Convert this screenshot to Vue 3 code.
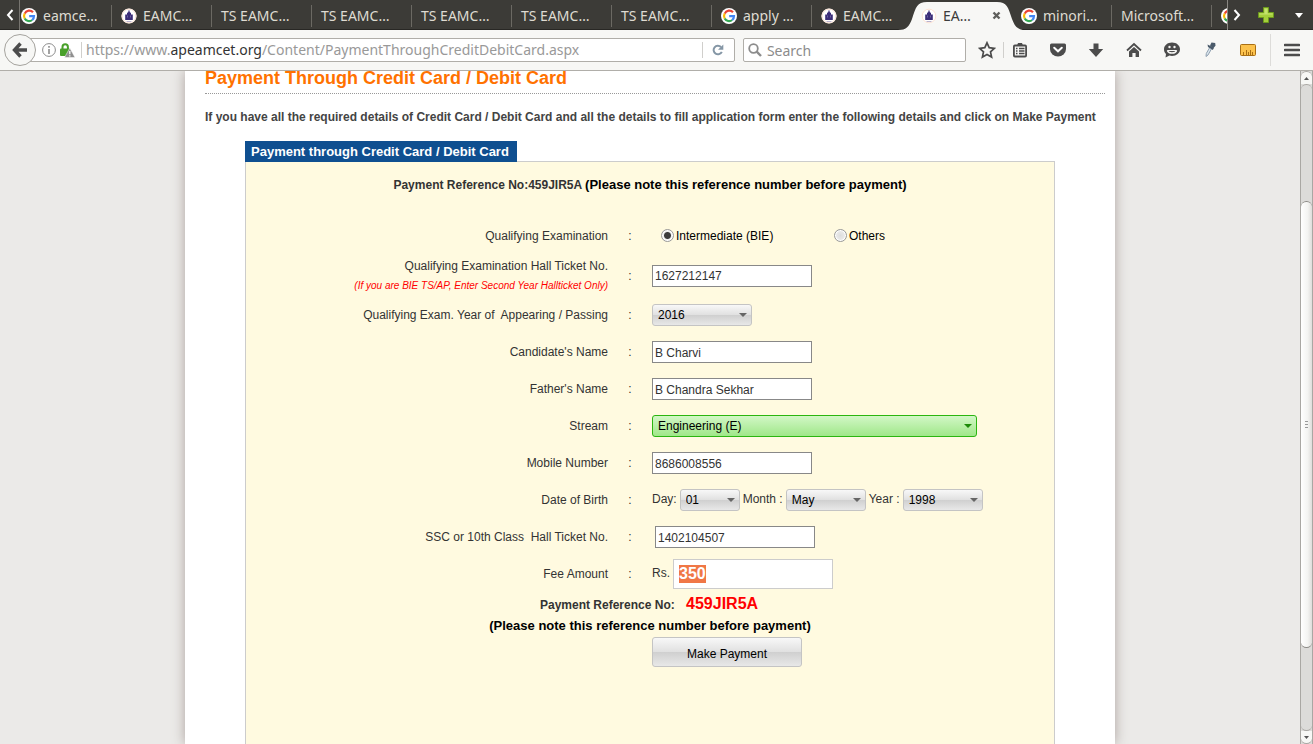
<script setup>
import { onMounted, ref } from 'vue'

const tabs = [
  { label: 'eamce…', icon: 'google', first: true },
  { label: 'EAMC…', icon: 'crest' },
  { label: 'TS EAMC…' },
  { label: 'TS EAMC…' },
  { label: 'TS EAMC…' },
  { label: 'TS EAMC…' },
  { label: 'TS EAMC…' },
  { label: 'apply …', icon: 'google' },
  { label: 'EAMC…', icon: 'crest', flat: true },
  { label: 'EA…', icon: 'crest', active: true, flat: true },
  { label: 'minori…', icon: 'google' },
  { label: 'Microsoft…' },
  { label: '', icon: 'google', last: true },
]

const exam = ref('bie')
const hallTicket = ref('1627212147')
const passYear = ref('2016')
const candidate = ref('B Charvi')
const father = ref('B Chandra Sekhar')
const stream = ref('E')
const mobile = ref('8686008556')
const day = ref('01')
const month = ref('May')
const year = ref('1998')
const ssc = ref('1402104507')
const fee = ref('350')
const feeInput = ref(null)

onMounted(() => {
  feeInput.value.focus({ preventScroll: true })
  feeInput.value.select()
})
</script>

<template>
  <div class="browser">
    <svg class="defs" width="0" height="0" aria-hidden="true">
      <symbol id="google" viewBox="0 0 16 16">
        <circle cx="8" cy="8" r="8" fill="#fff" />
        <g fill="none" stroke-width="2.2">
          <path d="M12 4.3A5 5 0 0 0 3.7 5.6" stroke="#ea4335" />
          <path d="M3.7 5.5A5 5 0 0 0 3.7 10.5" stroke="#fbbc05" />
          <path d="M3.7 10.4A5 5 0 0 0 11.2 12" stroke="#34a853" />
          <path d="M11.2 12A5 5 0 0 0 13 8.1H8.2" stroke="#4285f4" />
        </g>
      </symbol>
      <symbol id="crest" viewBox="0 0 16 16">
        <circle cx="8" cy="8" r="7.6" fill="#fff" />
        <circle cx="8" cy="8" r="6.900" fill="none" stroke="#fae0d0" stroke-width="1" />
        <path d="M7.400 2.500h1.200V4L10 5v1.500h1.800V12H4.200V6.500H6V5l1.400-1z" fill="#3b2d78" />
        <path d="M6.500 7.500v2M9.500 7.500v2" stroke="#8d83b8" stroke-width=".6" />
        <path d="M5.500 13.500h5" stroke="#b9b2d0" stroke-width="1" />
      </symbol>
    </svg>

    <nav class="tabbar" aria-label="Tabs">
      <button class="scroll-left" aria-label="Scroll tabs left">
        <svg width="9" height="14" viewBox="0 0 9 14"><path d="M7.500 2 3 7l4.500 5" fill="none" stroke="#fff" stroke-width="2" /></svg>
      </button>
      <button
        v-for="(t, i) in tabs"
        :key="i"
        class="tab"
        :class="{ first: t.first, active: t.active, flat: t.flat, last: t.last }"
        :aria-label="t.label || 'Google'"
      >
        <svg v-if="t.active" class="shape" width="128" height="28" viewBox="0 0 128 28">
          <path d="M0 28C8 28 11 25 14 17 18 5 19 0 29 0H99C109 0 110 5 114 17 117 25 120 28 128 28Z" fill="#f7f7f5" />
        </svg>
        <svg v-if="t.icon" class="fav" width="16" height="16"><use :href="'#' + t.icon" /></svg>
        <span v-if="t.label" class="tab-label">{{ t.label }}</span>
        <svg v-if="t.active" class="close" width="9" height="9" viewBox="0 0 9 9"><path d="M1.500 1.500l6 6M7.500 1.500l-6 6" stroke="#5f5f5c" stroke-width="2.400" /></svg>
      </button>
      <div class="tab-tools">
        <button class="tool-tab" aria-label="Scroll tabs right">
          <svg width="9" height="14" viewBox="0 0 9 14"><path d="M1.500 2 6 7l-4.500 5" fill="none" stroke="#fff" stroke-width="2" /></svg>
        </button>
        <button class="tool-tab" aria-label="New tab">
          <svg width="16" height="16" viewBox="0 0 16 16"><path d="M5.500.5h5v5h5v5h-5v5h-5v-5h-5v-5h5z" fill="#a5cf3c" stroke="#6d9a1d" /><path d="M6.500 1.500h3v5h5v1h-13v-1h5z" fill="#c4e26c" /></svg>
        </button>
        <button class="tool-tab" aria-label="List all tabs">
          <svg width="8" height="5" viewBox="0 0 8 5"><path d="M0 0h8L4 5z" fill="#fff" /></svg>
        </button>
      </div>
    </nav>

    <header class="toolbar">
      <button class="back" aria-label="Back">
        <svg width="16" height="16" viewBox="0 0 16 16"><path d="M8.500 1.500 2.500 8l6 6.500M3 8h12" fill="none" stroke="#4c4c4c" stroke-width="3.400" /></svg>
      </button>
      <div class="urlbar">
        <svg width="14" height="14" viewBox="0 0 14 14"><circle cx="7" cy="7" r="6.400" fill="none" stroke="#8c8c8c" /><path d="M7 6v5M7 3v1.800" stroke="#8c8c8c" stroke-width="1.600" /></svg>
        <svg class="lock" width="15" height="15" viewBox="0 0 15 15">
          <path d="M2.500 6V4a2.700 2.700 0 0 1 5.400 0v2" fill="none" stroke="#48a02a" stroke-width="2" />
          <rect x="0" y="5.500" width="10" height="7.500" rx="1" fill="#48a02a" />
          <path d="M9.800 5 15 14.500H4.500z" fill="#8f8f8f" stroke="#fff" stroke-width=".5" />
          <path d="M9.800 8v3.300M9.800 12.200v1.200" stroke="#fff" stroke-width="1.300" />
        </svg>
        <i class="sep"></i>
        <div class="url" role="textbox" aria-label="Address" contenteditable="true" spellcheck="false">https://www.<b>apeamcet.org</b>/Content/PaymentThroughCreditDebitCard.aspx</div>
        <i class="sep"></i>
        <button class="reload" aria-label="Reload">
          <svg width="12" height="12" viewBox="0 0 12 12"><path d="M9.800 7.800A4.300 4.300 0 1 1 9 3" fill="none" stroke="#8496a5" stroke-width="2" /><path d="M11.300.5v5.200H6z" fill="#8496a5" /></svg>
        </button>
      </div>
      <label class="search">
        <svg width="14" height="14" viewBox="0 0 14 14"><circle cx="5.500" cy="5.500" r="4.300" fill="none" stroke="#8c8c8c" stroke-width="1.800" /><path d="M8.700 8.700 13 13" stroke="#8c8c8c" stroke-width="2.400" /></svg>
        <input type="text" placeholder="Search" aria-label="Search" />
      </label>
      <div class="icons">
        <button aria-label="Bookmark this page">
          <svg width="18" height="18" viewBox="0 0 18 18"><path d="M9 1.800l2.200 4.900 5.200.6-3.900 3.600 1.100 5.200L9 13.500l-4.600 2.600 1.100-5.200L1.600 7.300l5.200-.6z" fill="none" stroke="#4c4c4c" stroke-width="1.700" /></svg>
        </button>
        <i class="sep"></i>
        <button aria-label="Bookmarks">
          <svg width="16" height="16" viewBox="0 0 16 16"><rect x="1.900" y="3.500" width="12.200" height="11" rx="1" fill="none" stroke="#4c4c4c" stroke-width="1.800" /><path d="M5 3.500 6 1h4l1 2.500z" fill="#4c4c4c" /><path d="M4 6.500h1.500M4 9h1.500M4 11.500h1.500M7 6.500h5.500M7 9h5.500M7 11.500h5.500" stroke="#4c4c4c" stroke-width="1.300" /></svg>
        </button>
        <button aria-label="Save to Pocket">
          <svg width="16" height="16" viewBox="0 0 16 16"><path d="M1.500 1.500h13Q16 1.500 16 3v4a8 7.500 0 0 1-16 0V3q0-1.500 1.500-1.500z" fill="#4c4c4c" /><path d="M4.200 5.700 8 9.300l3.800-3.600" fill="none" stroke="#fff" stroke-width="2" stroke-linecap="round" /></svg>
        </button>
        <button aria-label="Downloads">
          <svg width="16" height="16" viewBox="0 0 16 16"><path d="M5.500 1.500h5v5.500h4.700L8 15 .8 7h4.700z" fill="#4c4c4c" /></svg>
        </button>
        <button aria-label="Home">
          <svg width="16" height="16" viewBox="0 0 16 16"><path d="M1 8.500 8 2l7 6.500" fill="none" stroke="#4c4c4c" stroke-width="1.800" /><path d="M8 5l5 4.600V15H9.600v-4H6.400v4H3V9.600z" fill="#4c4c4c" /></svg>
        </button>
        <button aria-label="Chat">
          <svg width="16" height="16" viewBox="0 0 16 16"><path d="M8 .5c4.500 0 8 2.900 8 6.700s-3.500 6.700-8 6.700c-1 0-1.700-.1-2.500-.3L1.500 15.500 2 12C.7 10.800 0 9.200 0 7.200 0 3.400 3.500.5 8 .5z" fill="#4c4c4c" /><path d="M3.500 8.500c.8 3.400 8.200 3.400 9 0" fill="none" stroke="#f7f7f5" stroke-width="1.500" /><path d="M3.300 8.500h9.400" stroke="#f7f7f5" /><circle cx="5.500" cy="5" r="1.200" fill="#f7f7f5" /><circle cx="10.500" cy="5" r="1.200" fill="#f7f7f5" /></svg>
        </button>
        <button aria-label="Color picker">
          <svg width="16" height="16" viewBox="0 0 16 16"><path d="M8 5 4.300 11.500 4 14.500l2-1.500 3.800-6.700" fill="#dbe6ee" stroke="#8fa0b0" /><path d="M5.500 2.500 12 5.800 10.800 8 6 5z" fill="#4a5a6a" /><path d="M8 3.500 9.500.5l3.700.4.300 2.800-2.500 2.800z" fill="#4a5a6a" /></svg>
        </button>
        <button aria-label="Ruler">
          <svg width="18" height="14" viewBox="0 0 18 14"><rect x="1.500" y="1.500" width="15" height="11" rx="1" fill="#fcc24c" stroke="#a96f14" /><path d="M4.500 12V9M7.500 12V7M9.500 12V9M11.500 12V7M13.500 12V9" stroke="#a96f14" /></svg>
        </button>
      </div>
      <button class="menu" aria-label="Open menu">
        <svg width="16" height="14" viewBox="0 0 16 14"><path d="M1 2h14M1 7h14M1 12h14" stroke="#4c4c4c" stroke-width="2.600" stroke-linecap="round" /></svg>
      </button>
    </header>

    <div class="viewport">
      <div class="canvas">
        <main class="page">
          <h1>Payment Through Credit Card / Debit Card</h1>
          <p class="intro">If you have all the required details of Credit Card / Debit Card and all the details to fill application form enter the following details and click on Make Payment</p>
          <section class="panel">
            <h2>Payment through Credit Card / Debit Card</h2>
            <form class="box" @submit.prevent>
              <p class="reference">Payment Reference No:459JIR5A <strong>(Please note this reference number before payment)</strong></p>

              <div class="row">
                <span class="label">Qualifying Examination</span><span class="colon">:</span>
                <div class="field radios">
                  <label><input v-model="exam" type="radio" name="exam" value="bie" />Intermediate (BIE)</label>
                  <label><input v-model="exam" type="radio" name="exam" value="others" />Others</label>
                </div>
              </div>
              <div class="row tall">
                <label class="label" for="hall">Qualifying Examination Hall Ticket No.<em>(If you are BIE TS/AP, Enter Second Year Hallticket Only)</em></label><span class="colon">:</span>
                <div class="field"><input id="hall" v-model="hallTicket" class="text" type="text" /></div>
              </div>
              <div class="row">
                <label class="label" for="pass">Qualifying Exam. Year of&nbsp; Appearing / Passing</label><span class="colon">:</span>
                <div class="field"><span class="pick w100"><select id="pass" v-model="passYear"><option>2016</option></select></span></div>
              </div>
              <div class="row">
                <label class="label" for="cand">Candidate's Name</label><span class="colon">:</span>
                <div class="field"><input id="cand" v-model="candidate" class="text low" type="text" /></div>
              </div>
              <div class="row">
                <label class="label" for="father">Father's Name</label><span class="colon">:</span>
                <div class="field"><input id="father" v-model="father" class="text low" type="text" /></div>
              </div>
              <div class="row">
                <label class="label" for="stream">Stream</label><span class="colon">:</span>
                <div class="field"><span class="pick green"><select id="stream" v-model="stream"><option value="E">Engineering (E)</option></select></span></div>
              </div>
              <div class="row">
                <label class="label" for="mobile">Mobile Number</label><span class="colon">:</span>
                <div class="field"><input id="mobile" v-model="mobile" class="text low" type="text" /></div>
              </div>
              <div class="row">
                <span class="label">Date of Birth</span><span class="colon">:</span>
                <div class="field dob">
                  <label for="day">Day:</label><span class="pick w60"><select id="day" v-model="day"><option>01</option></select></span>
                  <label for="month">Month :</label><span class="pick w80"><select id="month" v-model="month"><option>May</option></select></span>
                  <label for="year">Year :</label><span class="pick w80"><select id="year" v-model="year"><option>1998</option></select></span>
                </div>
              </div>
              <div class="row">
                <label class="label" for="ssc">SSC or 10th Class&nbsp; Hall Ticket No.</label><span class="colon">:</span>
                <div class="field indent"><input id="ssc" v-model="ssc" class="text low" type="text" /></div>
              </div>
              <div class="row">
                <label class="label" for="fee">Fee Amount</label><span class="colon">:</span>
                <div class="field dob"><span>Rs.</span><input id="fee" ref="feeInput" v-model="fee" class="fee" type="text" /></div>
              </div>

              <p class="again">Payment Reference No: <b>459JIR5A</b></p>
              <p class="note">(Please note this reference number before payment)</p>
              <button class="pay" type="submit">Make Payment</button>
            </form>
          </section>
        </main>
      </div>
      <div class="scrollbar" aria-hidden="true">
        <span class="sb-end top"><svg width="5" height="3" viewBox="0 0 5 3"><path d="M0 3h5L2.500 0z" fill="#555" /></svg></span>
        <span class="track-a"></span>
        <span class="thumb"><i></i><i></i><i></i></span>
        <span class="track-b"></span>
        <span class="sb-end bottom"><svg width="5" height="3" viewBox="0 0 5 3"><path d="M0 0h5L2.500 3z" fill="#555" /></svg></span>
      </div>
    </div>
  </div>
</template>

<style>
html,
body {
  margin: 0;
  overflow: hidden;
}
</style>

<style scoped>
* {
  box-sizing: border-box;
}
button {
  font: inherit;
  padding: 0;
  border: 0;
  background: none;
  color: inherit;
}
svg {
  display: block;
  flex: none;
}
.defs {
  position: absolute;
}
.browser {
  height: 100vh;
  display: flex;
  flex-direction: column;
  font-family: "Noto Sans", "Open Sans", sans-serif;
  font-size: 14px;
}

/* tab strip */
.tabbar {
  flex: none;
  height: 30px;
  display: flex;
  background: #3c3b37;
  color: #dfdbd2;
  box-shadow: inset 0 -1px #282724;
  overflow: hidden;
}
.scroll-left {
  flex: none;
  width: 20px;
  display: flex;
  align-items: center;
  justify-content: center;
  border-right: 1px solid #777570;
}
.tab {
  position: relative;
  flex: none;
  width: 100px;
  display: flex;
  align-items: center;
  gap: 6px;
  padding: 1px 0 0 9px;
  text-align: left;
}
.tab::after {
  content: "";
  position: absolute;
  right: 0;
  top: 5px;
  height: 22px;
  border-right: 1px solid #6b6963;
}
.tab.flat::after,
.tab.last::after {
  display: none;
}
.tab.first {
  width: 92px;
  padding-left: 1px;
}
.tab.last {
  width: 16px;
  flex: 1;
  min-width: 0;
  overflow: hidden;
}
.tab.active {
  color: #3c3c3c;
}
.fav,
.tab-label,
.close {
  position: relative;
}
.tab-label {
  white-space: nowrap;
}
.shape {
  position: absolute;
  left: -14px;
  bottom: 0;
}
.close {
  margin-left: auto;
  margin-right: 11px;
}
.tab-tools {
  flex: none;
  width: 86px;
  display: flex;
  justify-content: space-between;
  padding: 0 10px 0 5px;
  border-left: 1px solid #8a8883;
}
.tool-tab {
  display: flex;
  align-items: center;
}
.tool-tab:nth-child(2) {
  padding-right: 5px;
}

/* navigation toolbar */
.toolbar {
  flex: none;
  height: 41px;
  display: flex;
  align-items: center;
  background: #f7f7f5;
  border-bottom: 1px solid #b0aea9;
  padding-left: 4px;
}
.back {
  position: relative;
  z-index: 1;
  flex: none;
  width: 32px;
  height: 32px;
  display: flex;
  align-items: center;
  justify-content: center;
  border: 1px solid #a5a39e;
  border-radius: 50%;
  background: #f7f7f5;
}
.urlbar {
  flex: 714 1 0;
  min-width: 0;
  height: 24px;
  margin-left: -16px;
  padding-left: 21px;
  display: flex;
  align-items: center;
  background: #fff;
  border: 1px solid #b0aea9;
  border-radius: 2px;
}
.lock {
  margin-left: 4px;
}
.sep {
  flex: none;
  width: 1px;
  height: 16px;
  background: #d0cfcc;
}
.lock + .sep {
  margin: 0 4px 0 6px;
}
.url {
  flex: 1;
  min-width: 0;
  overflow: hidden;
  white-space: nowrap;
  line-height: 20px;
  color: #999;
  outline: none;
}
.url b {
  font-weight: 400;
  color: #333;
}
.reload {
  width: 31px;
  display: flex;
  justify-content: center;
}
.search {
  flex: 224 1 0;
  min-width: 0;
  height: 24px;
  margin-left: 8px;
  padding-left: 4px;
  display: flex;
  align-items: center;
  gap: 5px;
  background: #fff;
  border: 1px solid #b0aea9;
  border-radius: 2px;
}
.search input {
  flex: 1;
  min-width: 0;
  height: 20px;
  border: 0;
  padding: 0;
  outline: none;
  background: none;
  font: inherit;
}
.search input::placeholder {
  color: #8c8c8c;
}
.icons {
  flex: none;
  display: flex;
  align-items: center;
  gap: 18px;
  margin-left: 11px;
}
.icons button {
  width: 20px;
  height: 20px;
  display: flex;
  align-items: center;
  justify-content: center;
}
.icons .sep {
  margin: 0 -12px;
}
.menu {
  flex: none;
  width: 43px;
  height: 32px;
  margin-left: 12px;
  display: flex;
  align-items: center;
  justify-content: center;
  border-left: 1px solid #dddcd9;
}

/* page */
.viewport {
  flex: 1;
  min-height: 0;
  display: flex;
  overflow: hidden;
  font-family: "Liberation Sans", Arial, sans-serif;
  font-size: 12px;
  color: #333;
}
.canvas {
  flex: 1;
  min-width: 0;
  display: flex;
  justify-content: center;
  background: #ebeae8;
  overflow: hidden;
}
.page {
  width: 930px;
  padding: 0 10px 0 20px;
  display: flex;
  flex-direction: column;
  background: #fff;
  box-shadow: 0 0 12px #aca29e;
}
h1 {
  margin: 0;
  padding-bottom: 8px;
  border-bottom: 1px dotted #999;
  font-size: 18px;
  line-height: 14px;
  color: #ff7200;
}
.intro {
  margin: 14px 0 15px;
  font-weight: 700;
  line-height: 18px;
  white-space: nowrap;
  color: #444;
}
.panel {
  flex: 1;
  display: flex;
  flex-direction: column;
  align-items: flex-start;
  margin: 0 50px 0 40px;
}
h2 {
  position: relative;
  margin: 0 0 -1px;
  padding: 0 8px 0 6px;
  background: #0f4f90;
  color: #fff;
  font-size: 13px;
  line-height: 21px;
}
.box {
  flex: 1;
  width: 100%;
  background: #fffae0;
  border: 1px solid #ccc;
  border-bottom: 0;
}
.reference {
  margin: 0;
  padding-top: 13px;
  line-height: 20px;
  height: 55px;
  text-align: center;
  font-weight: 700;
}
.reference strong {
  color: #000;
  font-size: 13px;
}
.row {
  display: grid;
  grid-template-columns: 362px 44px 1fr;
  align-items: center;
  height: 37px;
}
.row.tall {
  height: 42px;
  padding-top: 2px;
}
.label {
  text-align: right;
  line-height: 20px;
}
.label em {
  display: block;
  font-size: 10px;
  color: #f00;
}
.colon {
  text-align: center;
}
.field {
  display: flex;
  align-items: center;
}
.radios {
  color: #000;
}
.radios label {
  width: 173px;
  padding-left: 9px;
  display: flex;
  align-items: center;
  gap: 2px;
}
.radios input {
  appearance: none;
  width: 13px;
  height: 13px;
  margin: 0;
  border: 1px solid #999;
  border-radius: 50%;
  background: radial-gradient(#ddd, #f4f4f4);
  box-shadow: inset 0 0 0 1px #fff;
}
.radios input:checked {
  background: radial-gradient(circle, #3c3c3c 0 3px, #eee 4px);
}
.text {
  width: 160px;
  height: 22px;
  padding: 0 2px;
  border: 1px solid #888;
  border-radius: 0;
  background: #fff;
  color: #333;
  font: inherit;
}
.text.low {
  padding-top: 2px;
}
.indent {
  padding-left: 3px;
}
.pick {
  position: relative;
  display: block;
  height: 22px;
}
.pick::after {
  content: "";
  position: absolute;
  right: 5px;
  top: 9px;
  border: 4px solid transparent;
  border-top-color: #666;
  border-bottom: 0;
  pointer-events: none;
}
.pick select {
  appearance: none;
  display: block;
  width: 100%;
  height: 22px;
  padding: 0 5px;
  border: 1px solid #c4c4c4;
  border-radius: 3px;
  background: linear-gradient(#f8f8f8, #e0e0e0 50%, #cfcfcf 50%, #e8e8e8);
  color: #000;
  font: inherit;
}
.w100 {
  width: 100px;
}
.w80 {
  width: 80px;
}
.w60 {
  width: 60px;
}
.green {
  width: 325px;
}
.pick.green select {
  border-color: #2bb510;
  background: linear-gradient(#d2f7c6, #a0e789);
}
.green::after {
  border-top-color: #1d8a08;
}
.dob {
  gap: 3px;
}
.dob label,
.dob > span:first-child {
  padding-bottom: 2px;
}
.fee {
  width: 160px;
  height: 30px;
  padding: 0 5px;
  border: 1px solid #ccc;
  background: #fff;
  outline: none;
  font: 700 16px "Liberation Sans", Arial, sans-serif;
  color: #333;
}
.fee::selection {
  background: #f07746;
  color: #fff;
}
.again,
.note {
  margin: 0;
  line-height: 22px;
  height: 22px;
  font-weight: 700;
}
.again {
  margin-top: 1px;
  padding-left: 294px;
}
.again b {
  margin-left: 8px;
  font-size: 16px;
  color: #f00;
}
.note {
  text-align: center;
  color: #000;
  font-size: 13px;
}
.pay {
  display: block;
  width: 150px;
  height: 30px;
  margin-left: 406px;
  padding-top: 3px;
  border: 1px solid #c4c4c4;
  border-radius: 3px;
  background: linear-gradient(#f8f8f8, #e0e0e0 50%, #cfcfcf 50%, #e8e8e8);
  color: #000;
}

/* scrollbar */
.scrollbar {
  flex: none;
  width: 13px;
  display: flex;
  flex-direction: column;
  background: #dcdbd9;
  border: 1px solid #a9a7a3;
  border-top: 0;
  border-bottom: 0;
}
.sb-end {
  flex: none;
  height: 13px;
  display: flex;
  align-items: center;
  justify-content: center;
  background: #f7f7f5;
}
.sb-end.top {
  border-top: 1px solid #a9a7a3;
  border-radius: 6px 6px 0 0;
}
.sb-end.bottom {
  border-bottom: 1px solid #a9a7a3;
  border-radius: 0 0 6px 6px;
}
.track-a {
  flex: 117;
  border-top: 1px solid #a9a7a3;
  border-radius: 6px 6px 0 0;
}
.track-b {
  flex: 83;
  border-bottom: 1px solid #a9a7a3;
  border-radius: 0 0 6px 6px;
}
.thumb {
  flex: 447;
  display: flex;
  flex-direction: column;
  align-items: center;
  justify-content: center;
  gap: 2px;
  border: solid #8c8a86;
  border-width: 1px 0;
  border-radius: 6px;
  background: linear-gradient(90deg, #fff, #f4f4f2 60%, #dedddb);
}
.thumb i {
  width: 3px;
  height: 1px;
  background: #999;
}
</style>
